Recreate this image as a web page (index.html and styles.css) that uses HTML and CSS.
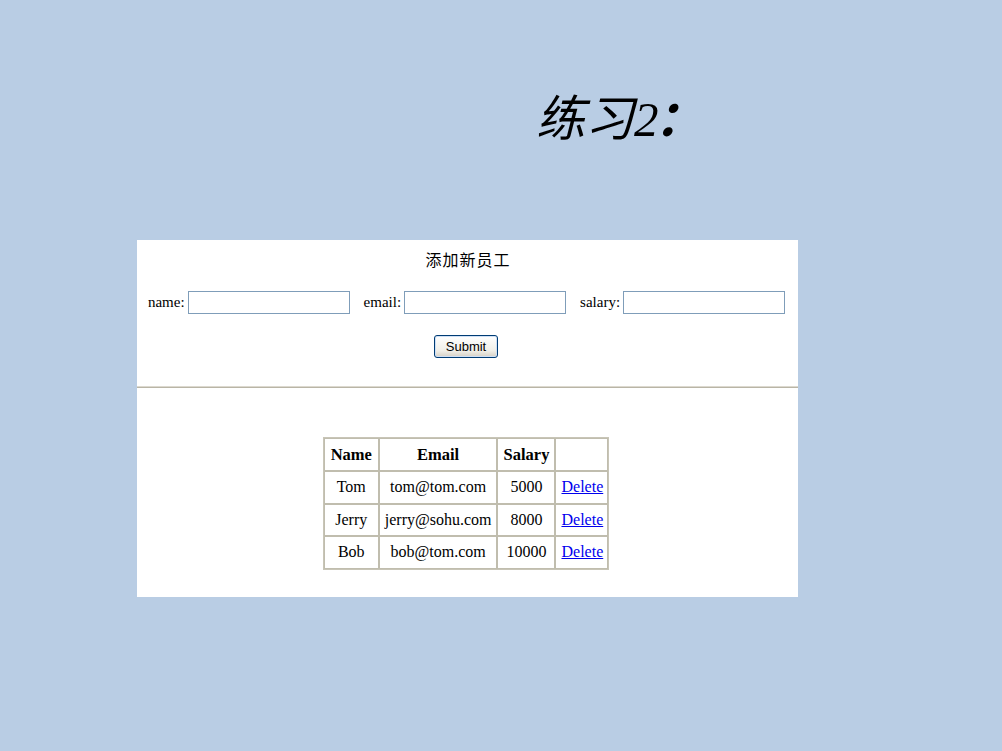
FILE: index.html
```html
<!DOCTYPE html>
<html lang="zh">
<head>
<meta charset="utf-8">
<title>练习2</title>
<link rel="stylesheet" href="styles.css">
</head>
<body>
<div class="slide">
  <h1 class="title">练习2<span class="colon">：</span></h1>
  <div class="panel">
    <div class="panel-head">添加新员工</div>
    <form class="form-row">
      <label class="field">name: <input class="text-input" type="text"></label>
      <label class="field">email: <input class="text-input" type="text"></label>
      <label class="field">salary: <input class="text-input" type="text"></label>
    </form>
    <div class="submit-row"><button class="submit-btn" type="button">Submit</button></div>
    <div class="divider"></div>
    <div class="table-wrap">
      <table class="emp-table">
        <thead>
          <tr><th class="c-name">Name</th><th class="c-email">Email</th><th class="c-salary">Salary</th><th class="c-act"></th></tr>
        </thead>
        <tbody>
          <tr><td>Tom</td><td>tom@tom.com</td><td>5000</td><td class="act"><a href="#">Delete</a></td></tr>
          <tr><td>Jerry</td><td>jerry@sohu.com</td><td>8000</td><td class="act"><a href="#">Delete</a></td></tr>
          <tr><td>Bob</td><td>bob@tom.com</td><td>10000</td><td class="act"><a href="#">Delete</a></td></tr>
        </tbody>
      </table>
    </div>
  </div>
</div>
</body>
</html>
```
FILE: styles.css
```css
html, body {
  margin: 0;
  padding: 0;
  background: #b9cde4;
  width: 1002px;
  height: 751px;
  overflow: hidden;
}
.slide {
  display: flex;
  flex-direction: column;
  padding-top: 88px;
}
.title {
  margin: 0 0 0 536px;
  height: 152px;
  font-family: "Liberation Serif", "Noto Sans CJK SC", serif;
  font-style: italic;
  font-weight: normal;
  font-size: 49px;
  line-height: 64px;
  color: #000;
}
.title .colon {
  font-weight: bold;
  margin-left: -4px;
}
.panel {
  margin-left: 137px;
  width: 661px;
  height: 357px;
  background: #fff;
  display: flex;
  flex-direction: column;
}
.panel-head {
  text-align: center;
  font-family: "Noto Sans CJK SC", sans-serif;
  font-size: 16px;
  letter-spacing: 1px;
  line-height: 22px;
  padding-top: 8px;
  padding-left: 1px;
  color: #000;
}
.form-row {
  display: flex;
  justify-content: center;
  gap: 14px;
  margin: 21px 0 0 -2px;
}
.field {
  display: flex;
  align-items: center;
  gap: 3px;
  font-family: "Liberation Serif", serif;
  font-size: 15px;
  color: #000;
}
.text-input {
  box-sizing: border-box;
  width: 162px;
  height: 23px;
  border: 1px solid #7f9db9;
  margin: 0;
  padding: 0 2px;
  background: #fff;
}
.submit-row {
  display: flex;
  justify-content: center;
  margin-top: 21px;
}
.submit-btn {
  box-sizing: border-box;
  width: 64px;
  height: 23px;
  margin-left: -3px;
  font-family: "Liberation Sans", sans-serif;
  font-size: 13px;
  color: #000;
  border: 1px solid #003c74;
  border-radius: 3px;
  background: linear-gradient(#ffffff, #f0efe8 70%, #d6d0c5);
  box-shadow: inset 0 0 0 1px #cfe0f5;
  padding: 0;
}
.divider {
  margin-top: 28px;
  border-top: 1px solid #dcd9cf;
  border-bottom: 1px solid #b9b5a6;
}
.table-wrap {
  display: flex;
  justify-content: center;
  margin-top: 49px;
  margin-left: -3px;
}
.emp-table {
  border-collapse: separate;
  border-spacing: 0;
  border: 1px solid #c8c5b7;
  font-family: "Liberation Serif", serif;
  font-size: 16px;
  color: #000;
}
.emp-table th,
.emp-table td {
  border: 1px solid #c0bdae;
  text-align: center;
  padding: 0 5px;
  height: 30.5px;
}
.emp-table th {
  font-weight: bold;
  font-size: 16.5px;
  height: 31px;
}
.emp-table .c-act,
.emp-table .act {
  padding: 0 4px 0 5px;
}
.c-name { width: 43px; }
.c-email { width: 106px; }
.c-salary { width: 46px; }
.c-act { width: 40px; }
.emp-table a {
  color: #0000ee;
  text-decoration: underline;
}
```
